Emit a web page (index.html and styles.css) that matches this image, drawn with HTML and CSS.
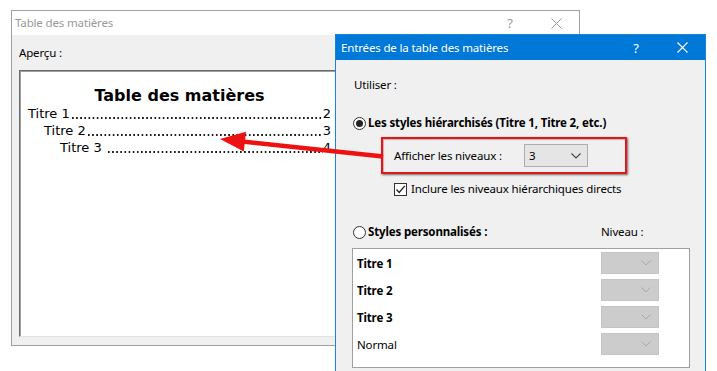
FILE: index.html
```html
<!DOCTYPE html>
<html lang="fr">
<head>
<meta charset="utf-8">
<title>Table des matières</title>
<link rel="stylesheet" href="styles.css">
</head>
<body>
<div class="desk">
  <div class="win back">
    <div class="titlebar">
      <span class="wtitle">Table des matières</span>
      <span class="tbtn help">?</span>
      <span class="tbtn close"><svg width="11" height="11" viewBox="0 0 11 11"><path d="M0.5 0.5L10.5 10.5M10.5 0.5L0.5 10.5" stroke="#9a9a9a" stroke-width="1"/></svg></span>
    </div>
    <div class="body">
      <div class="lbl">Aperçu :</div>
      <div class="preview">
        <div class="ptitle">Table des matières</div>
        <div class="toc l1"><span>Titre 1</span><span class="dots"></span><span>2</span></div>
        <div class="toc l2"><span>Titre 2</span><span class="dots"></span><span>3</span></div>
        <div class="toc l3"><span>Titre 3&nbsp;</span><span class="dots"></span><span>4</span></div>
      </div>
    </div>
  </div>

  <div class="win dialog">
    <div class="dtitlebar">
      <span class="wtitle">Entrées de la table des matières</span>
      <span class="tbtn help">?</span>
      <span class="tbtn close"><svg width="11" height="11" viewBox="0 0 11 11"><path d="M0.5 0.5L10.5 10.5M10.5 0.5L0.5 10.5" stroke="#ffffff" stroke-width="1.1"/></svg></span>
    </div>
    <div class="dbody">
      <div class="lbl use">Utiliser :</div>
      <div class="optrow first">
        <span class="radio on"></span>
        <span class="bold">Les styles hiérarchisés (Titre 1, Titre 2, etc.)</span>
      </div>
      <div class="levels">
        <span class="levlabel">Afficher les niveaux :</span>
        <span class="select"><span>3</span><svg width="10" height="6" viewBox="0 0 10 6"><path d="M0.5 0.5L5 5L9.5 0.5" fill="none" stroke="#444" stroke-width="1.1"/></svg></span>
      </div>
      <div class="checkrow">
        <span class="check"><svg width="11" height="11" viewBox="0 0 11 11"><path d="M1.5 5.5L4.2 8.5L9.8 1.8" fill="none" stroke="#222" stroke-width="1.3"/></svg></span>
        <span>Inclure les niveaux hiérarchiques directs</span>
      </div>
      <div class="optrow second">
        <span class="custom"><span class="radio"></span><span class="bold">Styles personnalisés :</span></span>
        <span>Niveau :</span>
      </div>
      <div class="list">
        <div class="lrow"><span class="bold">Titre 1</span><span class="dis"><svg width="10" height="6" viewBox="0 0 10 6"><path d="M0.5 0.5L5 5L9.5 0.5" fill="none" stroke="#a8a8a8" stroke-width="1"/></svg></span></div>
        <div class="lrow"><span class="bold">Titre 2</span><span class="dis"><svg width="10" height="6" viewBox="0 0 10 6"><path d="M0.5 0.5L5 5L9.5 0.5" fill="none" stroke="#a8a8a8" stroke-width="1"/></svg></span></div>
        <div class="lrow"><span class="bold">Titre 3</span><span class="dis"><svg width="10" height="6" viewBox="0 0 10 6"><path d="M0.5 0.5L5 5L9.5 0.5" fill="none" stroke="#a8a8a8" stroke-width="1"/></svg></span></div>
        <div class="lrow"><span>Normal</span><span class="dis"><svg width="10" height="6" viewBox="0 0 10 6"><path d="M0.5 0.5L5 5L9.5 0.5" fill="none" stroke="#a8a8a8" stroke-width="1"/></svg></span></div>
      </div>
    </div>
  </div>

  <svg class="arrow" width="717" height="371" viewBox="0 0 717 371">
    <line x1="238" y1="141" x2="383" y2="156.5" stroke="#ee1111" stroke-width="4.5" stroke-linecap="butt"/>
    <polygon points="220,139 246,131.8 243.8,151.6" fill="#ee1111"/>
  </svg>
</div>
</body>
</html>
```

FILE: styles.css
```css
html, body {
  margin: 0;
  padding: 0;
  background: #ffffff;
}

.desk {
  position: relative;
  width: 717px;
  height: 371px;
  overflow: hidden;
  font-family: "Noto Sans", "Liberation Sans", sans-serif;
  font-size: 11.5px;
  letter-spacing: -0.15px;
  color: #000;
}

.win {
  position: absolute;
  box-sizing: border-box;
  background: #f0f0f0;
}

.back {
  left: 11px;
  top: 10px;
  width: 569px;
  height: 336px;
  border: 1px solid #a0a0a0;
}

.titlebar {
  display: flex;
  align-items: center;
  height: 24px;
  background: #ffffff;
  color: #999999;
}

.wtitle {
  flex: 1;
  padding-left: 3px;
  line-height: 16px;
}

.tbtn {
  width: 46px;
  display: flex;
  align-items: center;
  justify-content: center;
  font-size: 13px;
}

.back .help {
  color: #9a9a9a;
}

.body {
  padding: 10px 7px 0 7px;
}

.lbl {
  line-height: 16px;
}

.preview {
  margin-top: 9px;
  width: 330px;
  height: 267px;
  box-sizing: border-box;
  background: #ffffff;
  border-top: 1px solid #6a6a6a;
  border-left: 1px solid #6a6a6a;
  border-bottom: 1px solid #e3e3e3;
  box-shadow: inset 1px 1px 0 #a0a0a0;
  padding: 16px 0 0 8px;
  font-family: "DejaVu Sans", Verdana, sans-serif;
  letter-spacing: 0;
}

.ptitle {
  width: 303px;
  text-align: center;
  font-weight: bold;
  font-size: 16px;
  line-height: 18px;
}

.toc {
  display: flex;
  width: 303px;
  box-sizing: border-box;
  font-size: 13px;
  line-height: 17px;
  white-space: nowrap;
}

.toc.l2 { padding-left: 16px; }
.toc.l3 { padding-left: 32px; }

.dots {
  flex: 1;
  height: 17px;
  margin-left: 1px;
  background-image: linear-gradient(to right, #1a1a1a 0, #1a1a1a 1.5px, rgba(0, 0, 0, 0) 1.5px);
  background-size: 4.13px 1.6px;
  background-position: 1px 12.4px;
  background-repeat: repeat-x;
}

.dialog {
  left: 335px;
  top: 34px;
  width: 371px;
  height: 345px;
  border: 1px solid #1c84d8;
}

.dtitlebar {
  display: flex;
  align-items: center;
  height: 25px;
  background: #0078d7;
  color: #ffffff;
}

.dtitlebar .wtitle {
  padding-left: 5px;
}

.dbody {
  padding-left: 18px;
}

.use {
  padding-top: 17px;
}

.bold {
  font-weight: bold;
}

.optrow {
  display: flex;
  align-items: center;
  line-height: 16px;
}

.optrow.first {
  margin-top: 22px;
  margin-left: -1px;
}

.radio {
  width: 13px;
  height: 13px;
  box-sizing: border-box;
  border: 1px solid #333;
  border-radius: 50%;
  background: #fff;
  margin-right: 2px;
  display: flex;
  align-items: center;
  justify-content: center;
}

.radio.on::after {
  content: "";
  width: 7px;
  height: 7px;
  border-radius: 50%;
  background: #222;
}

.levels {
  margin: 6px 0 0 27px;
  width: 246px;
  height: 37px;
  box-sizing: border-box;
  border: 2px solid #e8141b;
  box-shadow: 1px 1px 2px rgba(0, 0, 0, 0.55), inset 1px 1px 1px rgba(0, 0, 0, 0.25);
  display: flex;
  align-items: center;
  padding-left: 11px;
}

.levlabel {
  width: 130px;
}

.select {
  width: 64px;
  height: 23px;
  box-sizing: border-box;
  background: #e5e5e5;
  border: 1px solid #adadad;
  display: flex;
  align-items: center;
  justify-content: space-between;
  padding: 0 6px 0 4px;
}

.checkrow {
  display: flex;
  align-items: center;
  margin: 7px 0 0 40px;
  line-height: 16px;
}

.check {
  width: 13px;
  height: 13px;
  box-sizing: border-box;
  border: 1px solid #333;
  background: #fff;
  margin-right: 4px;
  display: flex;
  align-items: center;
  justify-content: center;
}

.optrow.second {
  margin-top: 27px;
  margin-left: -1px;
}

.custom {
  display: flex;
  align-items: center;
  width: 248px;
}

.list {
  margin: 8px 0 0 -2px;
  width: 338px;
  height: 120px;
  box-sizing: border-box;
  background: #fff;
  border: 1px solid #a0a0a0;
  padding-top: 3px;
}

.lrow {
  display: grid;
  grid-template-columns: 244px 58px;
  align-items: center;
  height: 22px;
  margin-bottom: 5px;
  padding-left: 4px;
}

.dis {
  height: 22px;
  box-sizing: border-box;
  background: #cccccc;
  border: 1px solid #c4c4c4;
  display: flex;
  align-items: center;
  justify-content: flex-end;
  padding-right: 7px;
}

.arrow {
  position: absolute;
  left: 0;
  top: 0;
  pointer-events: none;
}
```
